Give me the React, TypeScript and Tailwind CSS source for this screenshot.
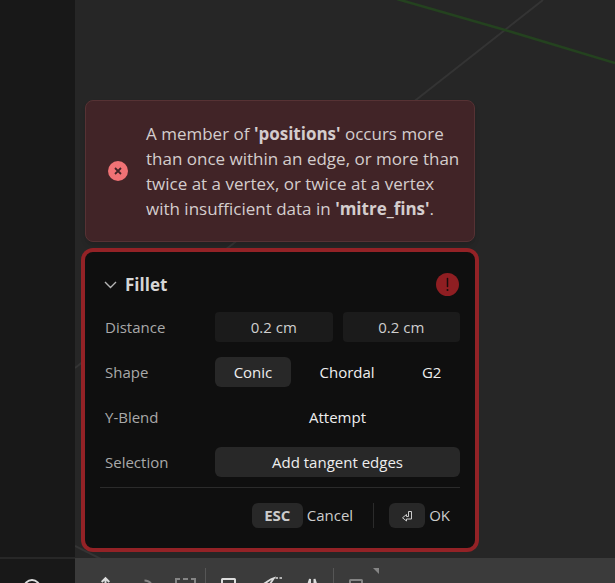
import React, { useState } from "react";

const shapes = ["Conic", "Chordal", "G2"];

const Divider = () => <span className="h-10 w-px shrink-0 bg-[#565656]" />;

interface ToolProps {
  label: string;
  dim?: boolean;
  children: React.ReactNode;
}

const Tool = ({ label, dim, children }: ToolProps) => (
  <button
    type="button"
    aria-label={label}
    className={`flex h-9 w-[41px] shrink-0 items-center justify-center ${dim ? "text-[#858585]" : "text-[#dcdcdc]"}`}
  >
    <svg width="24" height="24" viewBox="0 0 24 24" fill="none" stroke="currentColor" strokeWidth="2">
      {children}
    </svg>
  </button>
);

const Toolbar = () => (
  <div className="flex h-[25px] shrink-0 items-start overflow-hidden bg-[#3b3b3b] pt-2.5 pl-[7px]">
    <Tool label="Move">
      <path d="M14.500 4v18M10.700 8l3.800-3.800L18.300 8" />
    </Tool>
    <Tool label="Rotate" dim>
      <path d="M12.500 6.500c4 0 7 2 8 7" />
    </Tool>
    <Tool label="Scale" dim>
      <path d="M3 9V5h4M10 5h5M18 5h4v4M3 12v4M22 12v4M3 18v4h4M18 22h4v-4" />
    </Tool>
    <Divider />
    <div className="flex px-[2px]">
      <Tool label="Box">
        <rect x="5" y="5" width="13" height="14" rx="0.500" />
      </Tool>
      <Tool label="Cut">
        <path d="M4 10.500c4.500-1 6.500-5 12-6.500L10 13" strokeWidth="1.800" />
        <path d="M17.500 4h2.500M21.500 4h3" strokeWidth="1.500" />
      </Tool>
      <Tool label="Mirror">
        <path d="M11 5 6.500 19H11zM15.500 5 20 19h-4.500z" />
      </Tool>
    </div>
    <Divider />
    <div className="flex pl-[2px]">
      <Tool label="Duplicate" dim>
        <rect x="5" y="6" width="12" height="13" rx="0.500" />
      </Tool>
    </div>
    <svg className="-ml-1 shrink-0" width="6" height="6" viewBox="0 0 6 6" fill="#858585">
      <path d="M0 0h6v6z" />
    </svg>
  </div>
);

const Grid = () => (
  <svg className="absolute inset-0 h-full w-full" fill="none">
    <path d="M468 0 0 368M0 546l26 13" stroke="#343434" strokeWidth="2" />
    <path d="M322-1 430 30 540 63" stroke="#24421f" strokeWidth="2.500" />
  </svg>
);

const ErrorMessage = () => (
  <div
    role="alert"
    className="flex items-center rounded-lg border border-[#563234] bg-[#412427] py-5 pr-2 pl-[22px] shadow-md"
  >
    <svg className="mr-[18px] shrink-0" width="20" height="20" viewBox="0 0 20 20" fill="none">
      <circle cx="10" cy="10" r="10" fill="#f07275" />
      <path d="m7 7 6 6M13 7l-6 6" stroke="#412427" strokeWidth="1.800" />
    </svg>
    <p className="text-[17px] leading-[25px] text-[#d4cdcd]">
      A member of <b>'positions'</b> occurs more than once within an edge, or more than twice at a vertex, or twice at
      a vertex with insufficient data in <b>'mitre_fins'</b>.
    </p>
  </div>
);

const FilletDialog = () => {
  const [shape, setShape] = useState("Conic");
  const [first, setFirst] = useState("0.2 cm");
  const [second, setSecond] = useState("0.2 cm");

  const labelClass = "w-[110px] shrink-0 text-[#a9a9a9]";
  const inputClass = "h-[30px] w-full min-w-0 flex-1 rounded-sm bg-[#1b1b1b] text-center text-[#cfcfcf] outline-none";

  return (
    <section className="rounded-lg bg-[#0f0f0f] px-[15px] pt-[15px] pb-5 text-[15px] ring-4 ring-[#932226]">
      <header className="flex h-[35px] items-center justify-between pr-px pl-1">
        <button type="button" className="flex items-center gap-2 text-[17px] font-bold text-[#d6d6d6]">
          <svg width="13" height="8" viewBox="0 0 13 8" fill="none" stroke="#b5b5b5" strokeWidth="1.400">
            <path d="m1 1 5.500 5.500L12 1" />
          </svg>
          Fillet
        </button>
        <svg width="23" height="23" viewBox="0 0 23 23" role="img" aria-label="Error">
          <circle cx="11.500" cy="11.500" r="11.500" fill="#8f1e22" />
          <path d="M11.500 5.500v8" stroke="#180c0c" strokeWidth="1.500" strokeLinecap="round" />
          <circle cx="11.500" cy="17" r="1" fill="#180c0c" />
        </svg>
      </header>

      <div className="mt-2.5 flex flex-col gap-[15px] pl-[5px]">
        <div className="flex items-center">
          <label htmlFor="distance" className={labelClass}>Distance</label>
          <div className="flex min-w-0 flex-1 gap-2.5">
            <input id="distance" className={inputClass} value={first} onChange={(e) => setFirst(e.target.value)} />
            <input
              aria-label="Second distance"
              className={inputClass}
              value={second}
              onChange={(e) => setSecond(e.target.value)}
            />
          </div>
        </div>
        <div className="flex items-center" role="group" aria-labelledby="shape">
          <span id="shape" className={labelClass}>Shape</span>
          <div className="flex flex-1 gap-2.5">
            {shapes.map((name) => (
              <button
                key={name}
                type="button"
                aria-pressed={shape === name}
                onClick={() => setShape(name)}
                className={`h-[30px] flex-auto rounded-md px-2 text-[#eeeeee] ${shape === name ? "bg-[#282828]" : ""}`}
              >
                {name}
              </button>
            ))}
          </div>
        </div>
        <div className="flex items-center">
          <span id="blend" className={labelClass}>Y-Blend</span>
          <button type="button" aria-describedby="blend" className="h-[30px] flex-1 rounded-md text-[#eeeeee]">
            Attempt
          </button>
        </div>
        <div className="flex items-center">
          <span id="selection" className={labelClass}>Selection</span>
          <button
            type="button"
            aria-describedby="selection"
            className="h-[30px] flex-1 rounded-md bg-[#282828] text-[#eeeeee]"
          >
            Add tangent edges
          </button>
        </div>
      </div>

      <footer className="mt-2.5 flex justify-end border-t border-[#2b2b2b] pt-[15px] pr-2.5 text-[#cccccc]">
        <button type="button" className="flex items-center gap-1 pr-5">
          <kbd className="flex h-[25px] w-[51px] items-center justify-center rounded-md bg-[#282828] font-[inherit] font-bold">
            ESC
          </kbd>
          Cancel
        </button>
        <button type="button" className="flex items-center gap-1 border-l border-[#2b2b2b] pl-[15px]">
          <kbd className="flex h-[25px] w-9 items-center justify-center rounded-md bg-[#282828]">
            <svg width="12" height="12" viewBox="0 0 12 12" fill="none" stroke="currentColor">
              <path d="M7.500 1.500h3v7.500h-5v2L1.500 7.800l4-3.300v2h2z" />
            </svg>
          </kbd>
          OK
        </button>
      </footer>
    </section>
  );
};

const App = () => {
  return (
    <div className="flex h-screen overflow-hidden bg-[#262626] font-['Open_Sans','Noto_Sans',sans-serif]">
      <aside className="flex w-[75px] shrink-0 flex-col justify-end bg-[#181818]">
        <div className="h-[26px] overflow-hidden border-t-2 border-[#272727] pt-[18px] pl-[22px]">
          <button type="button" aria-label="Search" className="block">
            <svg width="20" height="20" viewBox="0 0 20 20" fill="none" stroke="#dddddd" strokeWidth="2">
              <circle cx="10" cy="11" r="8" />
            </svg>
          </button>
        </div>
      </aside>
      <div className="flex min-w-0 flex-1 flex-col">
        <main className="relative flex min-h-0 flex-1 flex-col justify-end px-2.5 pb-2.5">
          <Grid />
          <div className="relative flex w-full max-w-[390px] flex-col gap-2.5">
            <ErrorMessage />
            <FilletDialog />
          </div>
        </main>
        <Toolbar />
      </div>
    </div>
  );
};

export default App;
